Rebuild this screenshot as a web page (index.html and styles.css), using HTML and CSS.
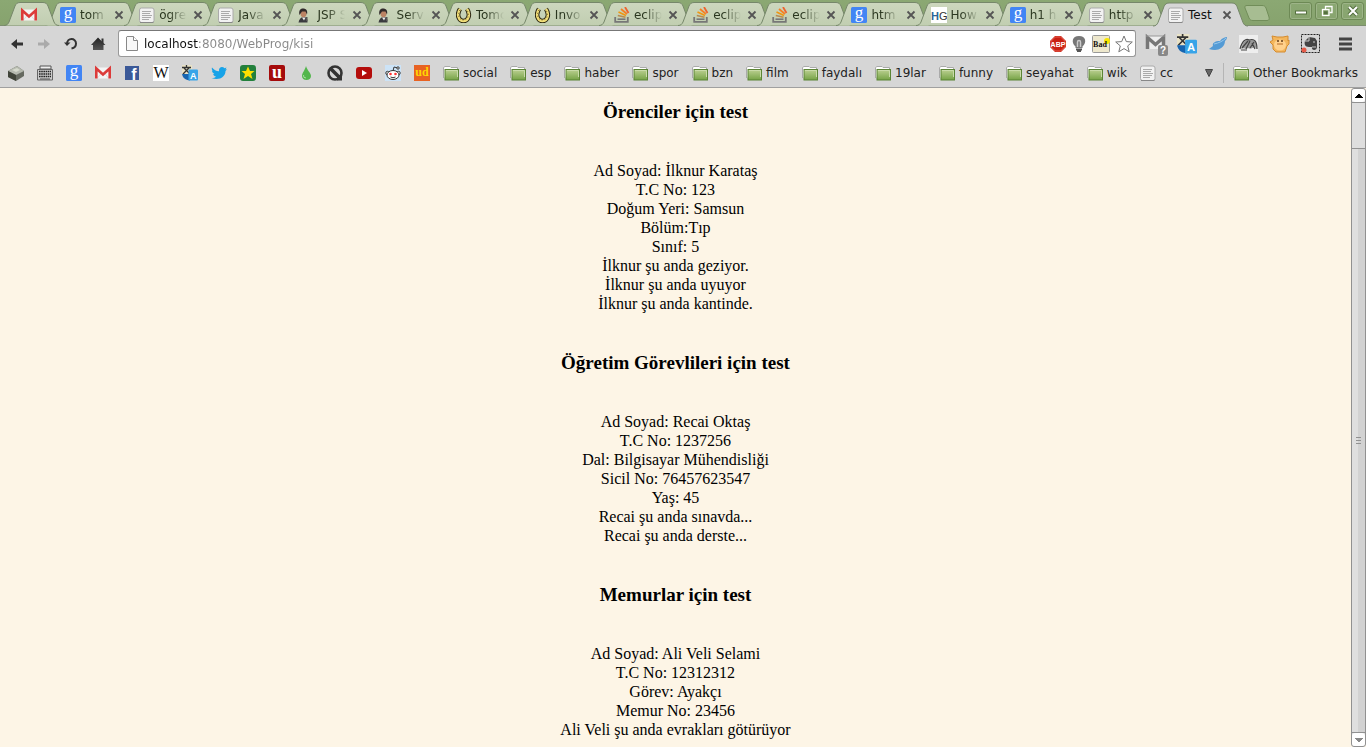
FILE: index.html
```html
<!DOCTYPE html>
<html lang="tr">
<head>
<meta charset="utf-8">
<title>Test</title>
<link rel="stylesheet" href="styles.css">
</head>
<body>
<svg class="defs" aria-hidden="true">
  <defs>
    <linearGradient id="folder-green" x1="0" y1="0" x2="0" y2="1"><stop offset="0" stop-color="#bdd193"/><stop offset="1" stop-color="#76a346"/></linearGradient>
    <linearGradient id="tab-fill" x1="0" y1="0" x2="0" y2="1"><stop offset="0" stop-color="#cdd7be"/><stop offset="1" stop-color="#c1ceb1"/></linearGradient>
    <linearGradient id="dark-fill" x1="0" y1="0" x2="0" y2="1"><stop offset="0" stop-color="#222"/><stop offset="1" stop-color="#555"/></linearGradient>
  </defs>
  <symbol id="tab-shape" viewBox="0 0 95 24">
    <path d="M0 23.5C3 23.5 4 22 5 20L11 4C12 2 13 .5 16 .5H79C82 .5 83 2 84 4L90 20C91 22 92 23.5 95 23.5"/>
  </symbol>
  <symbol id="close" viewBox="0 0 10 10"><path d="M1.500 1.500L8.500 8.500M8.500 1.500L1.500 8.500" stroke="#555" stroke-width="1.800"/></symbol>
  <symbol id="gmail" viewBox="0 0 16 16">
    <path d="M0 2.500h16v11H0z" fill="#f4f4f4"/><path d="M2.500 13L6.500 8M13.500 13L9.500 8" stroke="#ddd"/>
    <path d="M1.300 13.500V3.500L8 9.500L14.700 3.500V13.500" fill="none" stroke="#dc3b3a" stroke-width="2.600"/>
  </symbol>
  <symbol id="google" viewBox="0 0 16 16"><rect width="16" height="16" rx="1.500" fill="#4285f4"/><text x="8" y="11" class="g-letter">g</text></symbol>
  <symbol id="page" viewBox="0 0 16 16"><rect x=".5" y="1" width="14.500" height="14.500" rx="2" fill="#f2f2f2" stroke="#aaa"/><path d="M1 15.500h13.500" stroke="#888"/><path d="M3 4.500h9M3 6.500h8M3 8.500h10M3 10.500h9M3 12.500h7" stroke="#aaa"/></symbol>
  <symbol id="java" viewBox="0 0 16 16"><path d="M1.500 15.500C2 12 4 10 7 10s3.500 2 3.500 5.500z" fill="#3a3a3e"/><path d="M8 10h2.500v4H9z" fill="#555"/><ellipse cx="6.500" cy="6.500" rx="3" ry="3.800" fill="#bb8365"/><path d="M2.500 8C1.500 4 3 1.500 6 1.500s5 2 4 6L8.500 4.500H5z" fill="#302a2a"/><path d="M5 10.500l2 3 1.500-3z" fill="#eee"/></symbol>
  <symbol id="tomcat" viewBox="0 0 16 16"><path d="M4 2C0 8 3 14 7.500 14S15 8 11 2" fill="none" stroke="#28240f" stroke-width="4.500"/><path d="M4 2C0 8 3 14 7.500 14S15 8 11 2" fill="none" stroke="#f2df79" stroke-width="2.500"/><path d="M4 3C1 8 3 13 7.500 13S14 8 11 3" fill="none" stroke="#745f25" stroke-dasharray="1 2"/></symbol>
  <symbol id="stack" viewBox="0 0 16 16"><path d="M1.200 10V14.800H13.800V10" fill="none" stroke="#777" stroke-width="1.800"/><path d="M3.500 12.200H11.500" stroke="#777" stroke-width="1.600"/><path d="M3.800 8.500L11.500 10.200" stroke="#b98a4f" stroke-width="1.600"/><path d="M4.500 5L12 8.500" stroke="#ef9712" stroke-width="1.800"/><path d="M7 2L13 7" stroke="#f58025" stroke-width="1.800"/><path d="M11 0L14.500 6" stroke="#ee632f" stroke-width="1.800"/></symbol>
  <symbol id="folder" viewBox="0 0 16 16"><path d="M.5 13V2.500L2 1.500H7L8 2.500H14.500V5" fill="#fff" stroke="#aaa"/><path d="M2 4.500H12" stroke="#ccc"/><rect x="2" y="4.500" width="13.500" height="10.500" fill="url(#folder-green)" stroke="#5b8435"/><path d="M3 5.500H14.500V12" fill="none" stroke="#c9dba9"/></symbol>
  <symbol id="translate" viewBox="0 0 16 16"><path d="M0 0h10v9H0z" fill="#e9e2c6"/><path d="M0 2.500h9M4.500 0v2.500M2 3l6 6M7 3L1 9" stroke="#333" stroke-width="1.300"/><path d="M0 9C1 13 3 15 8 15.500V9z" fill="#1765b0"/><rect x="6.500" y="4.500" width="9.500" height="11" rx="1" fill="#38a4e8"/><text x="11.300" y="13.500" class="a-letter">A</text></symbol>
  <symbol id="bird" viewBox="0 0 16 16"><path d="M1 2.500C3 5 5 6 8 6.200C7.500 2 11.500 1 13.500 3.200L15.500 2.500L14.500 4.500L16 4.200L14.500 6C14.500 12 8 16 .5 13C3 13 4 12.500 5 11.500C3.500 11.200 2.500 10.500 2.200 9H3.500C2 8.200 1 7 1 5.500L2 6C.8 5 .5 3.800 1 2.500z"/></symbol>
</svg>

<header class="browser">
  <div class="strip">
    <div class="pinned"><svg class="shape" viewBox="0 0 55 24"><path d="M0 23.500C3 23.500 4 22 5 20L11 4C12 2 13 .5 16 .5H39C42 .5 43 2 44 4L50 20C51 22 52 23.500 55 23.500"/></svg><button class="label" aria-label="Gmail"><svg class="icon"><use href="#gmail"/></svg></button></div>
    <div class="tabs">
      <div class="tab"><svg class="shape"><use href="#tab-shape"/></svg><button class="label"><svg class="icon"><use href="#google"/></svg><span>tom</span></button><button class="close" aria-label="Close"><svg><use href="#close"/></svg></button></div>
      <div class="tab"><svg class="shape"><use href="#tab-shape"/></svg><button class="label"><svg class="icon"><use href="#page"/></svg><span>ögre</span></button><button class="close" aria-label="Close"><svg><use href="#close"/></svg></button></div>
      <div class="tab"><svg class="shape"><use href="#tab-shape"/></svg><button class="label"><svg class="icon"><use href="#page"/></svg><span>Java</span></button><button class="close" aria-label="Close"><svg><use href="#close"/></svg></button></div>
      <div class="tab"><svg class="shape"><use href="#tab-shape"/></svg><button class="label"><svg class="icon"><use href="#java"/></svg><span>JSP S</span></button><button class="close" aria-label="Close"><svg><use href="#close"/></svg></button></div>
      <div class="tab"><svg class="shape"><use href="#tab-shape"/></svg><button class="label"><svg class="icon"><use href="#java"/></svg><span>Serv</span></button><button class="close" aria-label="Close"><svg><use href="#close"/></svg></button></div>
      <div class="tab"><svg class="shape"><use href="#tab-shape"/></svg><button class="label"><svg class="icon"><use href="#tomcat"/></svg><span>Tomc</span></button><button class="close" aria-label="Close"><svg><use href="#close"/></svg></button></div>
      <div class="tab"><svg class="shape"><use href="#tab-shape"/></svg><button class="label"><svg class="icon"><use href="#tomcat"/></svg><span>Invo</span></button><button class="close" aria-label="Close"><svg><use href="#close"/></svg></button></div>
      <div class="tab"><svg class="shape"><use href="#tab-shape"/></svg><button class="label"><svg class="icon"><use href="#stack"/></svg><span>eclip</span></button><button class="close" aria-label="Close"><svg><use href="#close"/></svg></button></div>
      <div class="tab"><svg class="shape"><use href="#tab-shape"/></svg><button class="label"><svg class="icon"><use href="#stack"/></svg><span>eclip</span></button><button class="close" aria-label="Close"><svg><use href="#close"/></svg></button></div>
      <div class="tab"><svg class="shape"><use href="#tab-shape"/></svg><button class="label"><svg class="icon"><use href="#stack"/></svg><span>eclip</span></button><button class="close" aria-label="Close"><svg><use href="#close"/></svg></button></div>
      <div class="tab"><svg class="shape"><use href="#tab-shape"/></svg><button class="label"><svg class="icon"><use href="#google"/></svg><span>htm</span></button><button class="close" aria-label="Close"><svg><use href="#close"/></svg></button></div>
      <div class="tab"><svg class="shape"><use href="#tab-shape"/></svg><button class="label"><svg class="icon" viewBox="0 0 16 16"><path d="M0 0h16v16H0z" fill="#fff"/><text x="0" y="13" class="hg"><tspan class="hg-h">H</tspan>G</text></svg><span>How</span></button><button class="close" aria-label="Close"><svg><use href="#close"/></svg></button></div>
      <div class="tab"><svg class="shape"><use href="#tab-shape"/></svg><button class="label"><svg class="icon"><use href="#google"/></svg><span>h1 h</span></button><button class="close" aria-label="Close"><svg><use href="#close"/></svg></button></div>
      <div class="tab"><svg class="shape"><use href="#tab-shape"/></svg><button class="label"><svg class="icon"><use href="#page"/></svg><span>http</span></button><button class="close" aria-label="Close"><svg><use href="#close"/></svg></button></div>
      <div class="tab active"><svg class="shape"><use href="#tab-shape"/></svg><button class="label"><svg class="icon"><use href="#page"/></svg><span>Test</span></button><button class="close" aria-label="Close"><svg><use href="#close"/></svg></button></div>
    </div>
    <button class="new-tab" aria-label="New tab"><svg viewBox="0 0 26 16"><path d="M3 .5H18C20 .5 21 1 22 3L25 12C25.500 14 25 15.500 23 15.500H9C7 15.500 6 15 5 13L1 3C.5 1.500 1 .5 3 .5z" fill="#a7bd92" stroke="#718d59"/></svg></button>
    <div class="window">
      <button aria-label="Minimize"><svg viewBox="0 0 12 12"><path d="M0 7.500H12" stroke="#55703f" stroke-width="4"/><path d="M1 7.500H11" stroke="#fff" stroke-width="2"/></svg></button>
      <button aria-label="Restore"><svg viewBox="0 0 12 12" fill="none" stroke="#fff" stroke-width="1.300"><path d="M4.500 4V1.500H11V7.500H8.500"/><rect x="1.500" y="4.500" width="6.500" height="6"/><path d="M3.500 7h2.500v1.500H3.500z" stroke="#55703f"/></svg></button>
      <button aria-label="Close window"><svg viewBox="0 0 12 12"><path d="M2 2L10 10M10 2L2 10" stroke="#55703f" stroke-width="4"/><path d="M2 2L10 10M10 2L2 10" stroke="#fff" stroke-width="2"/></svg></button>
    </div>
  </div>

  <div class="toolbar">
    <nav class="nav">
      <button aria-label="Back"><svg class="icon" viewBox="0 0 16 16"><path d="M2 8L8 3V6.500H14V9.500H8V13z" fill="#333"/></svg></button>
      <button aria-label="Forward"><svg class="icon" viewBox="0 0 16 16"><path d="M14 8L8 3V6.500H2V9.500H8V13z" fill="#aaa"/></svg></button>
      <button aria-label="Reload"><svg class="icon" viewBox="0 0 16 16"><path d="M4 8C4 1.500 13 1.500 13 7.500C13 10.500 11 12 8.500 12.500" fill="none" stroke="#333" stroke-width="2"/><path d="M1 6.500L4 10L7.500 6.500z" fill="#333"/></svg></button>
      <button aria-label="Home"><svg class="icon" viewBox="0 0 16 16"><path d="M8 1.500L15.500 9H13.500V14H3V9H1z" fill="url(#dark-fill)"/><path d="M11.500 2.500h2v5h-2z" fill="#333"/></svg></button>
    </nav>
    <div class="omnibox">
      <svg class="doc" viewBox="0 0 12 16"><path d="M1 .5H7.500L11.500 4.500V14.500H.5V1z" fill="#f8f8f8" stroke="#888"/><path d="M7.500 .5V4.500H11.500" fill="#fff" stroke="#888"/></svg>
      <input type="text" aria-label="Address" value="localhost:8080/WebProg/kisi">
      <button aria-label="Adblock Plus"><svg class="icon" viewBox="0 0 16 16"><path d="M5 0H11L16 5V11L11 16H5L0 11V5z" fill="#c91f13"/><path d="M5.300 1H10.700L15 5.300V10.700L10.700 15H5.300L1 10.700V5.300z" fill="none" stroke="#e4604f"/><text x="8" y="10.500" class="abp">ABP</text></svg></button>
      <button aria-label="Lights"><svg class="icon" viewBox="0 0 16 16"><path d="M8 0C1 0 0 6.500 4.500 10.500V12h7v-1.500C16 6.500 15 0 8 0z" fill="#777"/><path d="M6.500 11V6C6.500 4 9.500 4 9.500 6V11" fill="none" stroke="#ccc" stroke-width="1.500"/><path d="M5 13.500h6M6 15.500h4" stroke="#555" stroke-width="2"/></svg></button>
      <button aria-label="Bad"><svg class="bad" viewBox="0 0 18 18"><rect x=".5" y=".5" width="17" height="17" rx="1" fill="#eee8cd" stroke="#999"/><circle cx="15" cy="6" r="3" fill="#f8e600"/><text x="8" y="12" class="bad-text">Bad</text></svg></button>
      <button aria-label="Bookmark"><svg class="star" viewBox="0 0 18 18"><path d="M9 1L11.300 6.600L17.300 7L12.700 10.900L14.200 16.800L9 13.600L3.800 16.800L5.300 10.900L.7 7L6.700 6.600z" fill="#fff" stroke="#777"/></svg></button>
    </div>
    <div class="extensions">
      <button aria-label="Mail checker"><svg viewBox="0 0 24 24"><path d="M1 4h19v13H1z" fill="#eee"/><path d="M2.500 17V5.500L10.500 12.500L18.500 5.500V17" fill="none" stroke="#777" stroke-width="3.500"/><path d="M1 4h19" stroke="#999"/><rect x="13" y="13" width="10" height="11" rx="2" fill="#888"/><text x="18" y="22" class="q">?</text></svg></button>
      <button aria-label="Translate"><svg viewBox="0 0 20 20"><use href="#translate" width="20" height="20"/></svg></button>
      <button aria-label="Twitter"><svg viewBox="0 0 20 20"><path d="M1 15L5 12C4 9 7 7 12 7C14 4 17 3 19 3C19 5 18 6 17 7C17 13 11 16 7 16C5 16 3 15.500 1 15z" fill="#549bd5"/><path d="M6 10C11 9 15 7 18 4" fill="none" stroke="#9bc9ec"/></svg></button>
      <button aria-label="Sketch"><svg viewBox="0 0 20 20"><path d="M0 1h19v18H0z" fill="#eee"/><path d="M2 15C4 7 8 4 11 6C16 4 18 9 18 15C15 11 13 16 9 14C7 16 4 13 2 15z" fill="#999"/><path d="M1 15C3 7 7 4 10 6C16 4 18 8 18 15M3 14L9 7M7 15L11 7M11 14L15 8M2 16H8M13 9L16 15" fill="none" stroke="#444" stroke-width="1.200"/></svg></button>
      <button aria-label="Cat"><svg viewBox="0 0 20 20"><path d="M2 2L7 3H13L18 2V7L19 6V10L17 12L15 18H11H6L3 15V11L0 8L3 6z" fill="#f3b65c" stroke="#d58c30"/><ellipse cx="10" cy="11" rx="6" ry="5.500" fill="#ffd18d"/><circle cx="8" cy="7" r="1" fill="#653b17"/><circle cx="12" cy="7" r="1" fill="#653b17"/><path d="M7 10h6" stroke="#b66b26"/></svg></button>
      <button aria-label="Evernote"><svg viewBox="0 0 20 20"><rect x=".5" y=".5" width="18" height="18" fill="none" stroke="#222" stroke-dasharray="2 1"/><path d="M4 7L8 3L14 4L16 7V13C16 17 10 17 11 13H8C4 13 3 10 4 7z" fill="#444"/><path d="M4 7H8V3M12 8h2M11 13h4" fill="none" stroke="#ccc"/><circle cx="3" cy="16" r="2.500" fill="#e55a47"/></svg></button>
      <button aria-label="Menu"><svg viewBox="0 0 20 20"><path d="M4 5H17M4 10H17M4 15H17" stroke="#444" stroke-width="3"/></svg></button>
    </div>
  </div>

  <nav class="bookmarks" aria-label="Bookmarks">
    <a href="#" aria-label="Box"><svg class="icon" viewBox="0 0 16 16"><path d="M0 6L9 1L16 6V11L8 16L0 12z" fill="#666a60"/><path d="M0 6L9 1L16 6L8 10z" fill="#b5b9ae"/><path d="M0 6L8 10V16L0 12z" fill="#404439"/><path d="M4 5L9 3L12 5L8 7z" fill="#d6dacd"/></svg></a>
    <a href="#" aria-label="Typewriter"><svg class="icon" viewBox="0 0 16 16"><path d="M3 1h11v3H3z" fill="#eee" stroke="#555"/><path d="M.5 4.500h15V15H.5z" fill="#ccc" stroke="#666"/><path d="M2 6.500h12M2 9h12M2 11.500h12" stroke="#222" stroke-width="1.700" stroke-dasharray="1.600 .6"/><path d="M3 14h10" stroke="#555"/></svg></a>
    <a href="#" aria-label="Google"><svg class="icon"><use href="#google"/></svg></a>
    <a href="#" aria-label="Gmail"><svg class="icon"><use href="#gmail"/></svg></a>
    <a href="#" aria-label="Facebook"><svg class="icon" viewBox="0 0 16 16"><path d="M1 1h14v14H1z" fill="#3b5998"/><text x="10" y="15" class="fb">f</text></svg></a>
    <a href="#" aria-label="Wikipedia"><svg class="icon" viewBox="0 0 16 16"><path d="M0 0h16v16H0z" fill="#fff"/><text x="8" y="13" class="wiki">W</text></svg></a>
    <a href="#" aria-label="Translate"><svg class="icon"><use href="#translate"/></svg></a>
    <a href="#" aria-label="Twitter"><svg class="icon twitter"><use href="#bird"/></svg></a>
    <a href="#" aria-label="Star"><svg class="icon" viewBox="0 0 16 16"><rect width="16" height="16" rx="3" fill="#23803c"/><path d="M8 1.500L10 6H14.500L11 9L12.500 14L8 11L3.500 14L5 9L1.500 6H6z" fill="#ffdf00"/></svg></a>
    <a href="#" aria-label="U"><svg class="icon" viewBox="0 0 16 16"><rect width="16" height="16" rx="2" fill="#a50b0b"/><text x="8" y="13" class="u-letter">u</text></svg></a>
    <a href="#" aria-label="Drop"><svg class="icon" viewBox="0 0 16 16"><path d="M8 1C9 5 13 8 13 11C13 13.500 11 15 8.500 15S4 13.500 4 11C4 8 7 5 8 1z" fill="#53b64c"/><path d="M5.500 10Q5 13 8 13" fill="none" stroke="#a6e09f"/></svg></a>
    <a href="#" aria-label="Blocked"><svg class="icon" viewBox="0 0 16 16"><circle cx="8" cy="8" r="6.500" fill="none" stroke="#333" stroke-width="2.600"/><path d="M3 3L13 13" stroke="#333" stroke-width="3.500"/><path d="M11 10h4v5.500h-5z" fill="#333"/></svg></a>
    <a href="#" aria-label="YouTube"><svg class="icon" viewBox="0 0 16 16"><rect y="2" width="16" height="12" rx="3" fill="#b40d0b"/><path d="M6 5L11 8L6 11z" fill="#fff"/></svg></a>
    <a href="#" aria-label="Reddit"><svg class="icon" viewBox="0 0 16 16"><path d="M0 0h16v16H0z" fill="#cce3f7"/><path d="M8 6L9 2L13 3" fill="none" stroke="#333"/><circle cx="13" cy="3" r="1.200" fill="#fff" stroke="#333"/><circle cx="2.500" cy="8" r="1.700" fill="#fff" stroke="#333"/><circle cx="13.500" cy="8" r="1.700" fill="#fff" stroke="#333"/><ellipse cx="8" cy="10" rx="6" ry="4.500" fill="#fff" stroke="#333"/><circle cx="5.500" cy="9" r="1.300" fill="#f33"/><circle cx="10.500" cy="9" r="1.300" fill="#f33"/><path d="M5.500 12Q8 13.500 10.500 12" fill="none" stroke="#333"/></svg></a>
    <a href="#" aria-label="Urban Dictionary"><svg class="icon" viewBox="0 0 16 16"><path d="M0 0h16v16H0z" fill="#e86222"/><text x="8" y="11" class="ud">ud</text></svg></a>
    <a href="#"><svg class="icon"><use href="#folder"/></svg>social</a>
    <a href="#"><svg class="icon"><use href="#folder"/></svg>esp</a>
    <a href="#"><svg class="icon"><use href="#folder"/></svg>haber</a>
    <a href="#"><svg class="icon"><use href="#folder"/></svg>spor</a>
    <a href="#"><svg class="icon"><use href="#folder"/></svg>bzn</a>
    <a href="#"><svg class="icon"><use href="#folder"/></svg>film</a>
    <a href="#"><svg class="icon"><use href="#folder"/></svg>faydalı</a>
    <a href="#"><svg class="icon"><use href="#folder"/></svg>19lar</a>
    <a href="#"><svg class="icon"><use href="#folder"/></svg>funny</a>
    <a href="#"><svg class="icon"><use href="#folder"/></svg>seyahat</a>
    <a href="#"><svg class="icon"><use href="#folder"/></svg>wik</a>
    <a href="#"><svg class="icon"><use href="#page"/></svg>cc</a>
    <button class="more" aria-label="More bookmarks"><svg viewBox="0 0 10 10"><path d="M1.500 1.500H8.500L5 8.500z" fill="#666" stroke="#444"/></svg></button>
    <a href="#" class="other"><svg class="icon"><use href="#folder"/></svg>Other Bookmarks</a>
  </nav>
</header>

<div class="viewport">
  <main>
    <section>
      <h3>Örenciler için test</h3>
      <p>Ad Soyad: İlknur Karataş<br>T.C No: 123<br>Doğum Yeri: Samsun<br>Bölüm:Tıp<br>Sınıf: 5<br>İlknur şu anda geziyor.<br>İlknur şu anda uyuyor<br>İlknur şu anda kantinde.</p>
    </section>
    <section>
      <h3>Öğretim Görevlileri için test</h3>
      <p>Ad Soyad: Recai Oktaş<br>T.C No: 1237256<br>Dal: Bilgisayar Mühendisliği<br>Sicil No: 76457623547<br>Yaş: 45<br>Recai şu anda sınavda...<br>Recai şu anda derste...</p>
    </section>
    <section>
      <h3>Memurlar için test</h3>
      <p>Ad Soyad: Ali Veli Selami<br>T.C No: 12312312<br>Görev: Ayakçı<br>Memur No: 23456<br>Ali Veli şu anda evrakları götürüyor</p>
    </section>
  </main>
  <div class="scrollbar">
    <button class="up" aria-label="Scroll up"><svg viewBox="0 0 8 4"><path d="M3 0h2v1h1v1h1v1h1v1H0V3h1V2h1V1h1z" fill="#000"/></svg></button>
    <div class="track"></div>
    <div class="thumb"><i></i><i></i><i></i></div>
    <button class="down" aria-label="Scroll down"><svg viewBox="0 0 8 4"><path d="M0 0h8v1H7v1H6v1H5v1H3V3H2V2H1V1H0z" fill="#888"/></svg></button>
  </div>
</div>
</body>
</html>
```

FILE: styles.css
```css
* { box-sizing: border-box; }

body {
  margin: 0;
  height: 100vh;
  display: flex;
  flex-direction: column;
  overflow: hidden;
  background: #fdf5e6;
  font: 16px/19px "Liberation Serif", serif;
  color: #000;
}

button {
  display: flex;
  align-items: center;
  justify-content: center;
  padding: 0;
  border: 0;
  background: none;
  font: inherit;
  color: inherit;
}

svg { display: block; flex: none; }
.defs { position: absolute; width: 0; height: 0; visibility: hidden; }
.icon { width: 16px; height: 16px; }

/* Browser frame */
.browser {
  flex: none;
  background: #d6d6d6;
  border-bottom: 1px solid #a0a0a0;
  font: 12px/16px "DejaVu Sans", sans-serif;
  color: #222;
}

.strip {
  display: flex;
  height: 26px;
  padding-left: 4px;
  background: linear-gradient(#8ba873, #87a36e);
  border-bottom: 1px solid #7c8e6e;
}

.pinned,
.tab {
  position: relative;
  display: flex;
  align-items: center;
  height: 26px;
  padding-top: 3px;
}

.pinned { flex: none; width: 41px; padding-left: 17px; z-index: 2; }
.pinned .shape { width: 55px; }

.tabs { flex: 1; min-width: 0; display: flex; }
.tab { flex: 1 1 0; min-width: 0; padding-left: 15px; }

.shape {
  position: absolute;
  left: 0;
  top: 2px;
  width: 95px;
  height: 24px;
  fill: url(#tab-fill);
  stroke: #76876a;
}

.label { position: relative; flex: 1; min-width: 0; gap: 4px; justify-content: flex-start; }
.label span {
  flex: 1;
  text-align: left;
  white-space: nowrap;
  color: #2b3720;
  mask-image: linear-gradient(to right, #000 10px, transparent 28px);
}
.close { position: relative; width: 10px; margin-left: 6px; }
.close svg { width: 10px; height: 10px; }

.active { z-index: 3; }
.active .shape { fill: #d6d6d6; height: 25px; }
.active .label span { color: #111; mask-image: none; }

.new-tab { flex: none; width: 26px; margin-left: 12px; }
.new-tab svg { width: 26px; height: 16px; }

.window { flex: none; display: flex; gap: 3px; padding: 2px 2px 6px; margin-left: 17px; }
.window button {
  width: 23px;
  height: 18px;
  border: 1px solid #6d8955;
  border-radius: 3px;
  box-shadow: inset 0 0 0 1px #9db488;
}
.window svg { width: 12px; height: 12px; }

.toolbar {
  display: flex;
  align-items: center;
  height: 32px;
  padding: 3px 11px 0 9px;
}
.nav { display: flex; gap: 11px; width: 109px; }

.omnibox {
  flex: 1;
  display: flex;
  align-items: center;
  gap: 5px;
  height: 27px;
  padding: 0 2px 0 7px;
  background: #fff;
  border: 1px solid #999;
  border-top-color: #777;
  border-radius: 3px;
}
.doc { width: 12px; height: 16px; margin-right: 1px; }
.omnibox input {
  flex: 1;
  min-width: 0;
  height: 20px;
  padding: 0;
  border: 0;
  outline: 0;
  font: inherit;
  color: transparent;
  background: linear-gradient(to right, #111 54px, #888 54px);
  background-clip: text;
}
.bad, .star { width: 18px; height: 18px; }

.extensions { display: flex; gap: 11px; align-items: center; margin-left: 9px; }
.extensions svg { width: 20px; height: 20px; }
.extensions button:first-child { width: 23px; margin-right: -2px; }
.extensions button:first-child svg { width: 24px; height: 24px; }
.extensions button:last-child { margin-left: 3px; }

.bookmarks {
  display: flex;
  align-items: center;
  gap: 13px;
  height: 29px;
  padding: 0 8px;
}
.bookmarks a {
  display: flex;
  align-items: center;
  gap: 4px;
  flex: none;
  color: #222;
  text-decoration: none;
  white-space: nowrap;
}
.twitter { fill: #18a3e8; }
.more { margin-left: auto; width: 10px; }
.more svg { width: 10px; height: 10px; }
.bookmarks .other {
  margin-left: -4px;
  padding-left: 9px;
  height: 20px;
  border-left: 1px solid #b5b5b5;
}

/* Lettering in site icons */
.g-letter { font: 17px "Liberation Serif", serif; fill: #fff; text-anchor: middle; }
.a-letter { font: bold 9px "Liberation Sans", sans-serif; fill: #fff; text-anchor: middle; }
.hg { font: 11px "Liberation Sans", sans-serif; fill: #333; }
.hg-h { font-weight: bold; fill: #2b6597; }
.abp { font: bold 7px "Liberation Sans", sans-serif; fill: #fff; text-anchor: middle; }
.bad-text { font: bold 8px "Liberation Serif", serif; fill: #111; text-anchor: middle; }
.q { font: bold 10px "Liberation Sans", sans-serif; fill: #fff; text-anchor: middle; }
.fb { font: bold 16px "Liberation Sans", sans-serif; fill: #fff; text-anchor: middle; }
.wiki { font: 16px "Liberation Serif", serif; fill: #111; text-anchor: middle; }
.u-letter { font: bold 18px "Liberation Serif", serif; fill: #fff; text-anchor: middle; }
.ud { font: bold 12px "Liberation Serif", serif; fill: #ffd800; text-anchor: middle; }

/* Page */
.viewport { flex: 1; min-height: 0; display: flex; }
main {
  flex: 1;
  min-width: 0;
  padding-top: 13px;
  overflow: hidden;
  text-align: center;
}
section { margin-bottom: 39px; }
h3 { margin: 0 0 38px; font-size: 19px; line-height: 22px; }
p { margin: 0; }

.scrollbar {
  width: 15px;
  display: flex;
  flex-direction: column;
  border: 1px solid #919191;
  border-radius: 3px;
  background: #dedede;
}
.scrollbar button { height: 13px; flex: none; background: #fff; border-radius: 3px; }
.scrollbar svg { width: 8px; height: 4px; }
.track { flex: 0 0 7%; margin-top: 0; border-top: 1px solid #919191; }
.thumb {
  flex: 1;
  display: flex;
  flex-direction: column;
  align-items: center;
  justify-content: center;
  gap: 2px;
  border: solid #919191;
  border-width: 1px 0;
  background: linear-gradient(to right, #dfdfdf 50%, #d2d2d2 50%);
}
.thumb i { width: 5px; height: 1px; background: #919191; }
```
